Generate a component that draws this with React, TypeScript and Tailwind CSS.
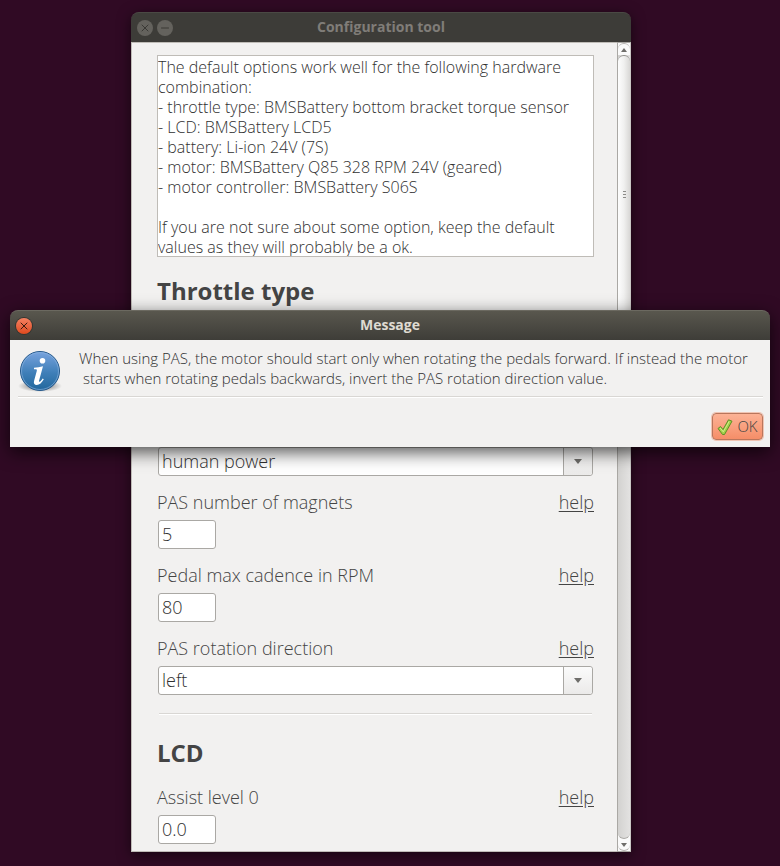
import { useState } from 'react';
import { Minus, X } from 'lucide-react';

const defaultNotes = `The default options work well for the following hardware combination:
- throttle type: BMSBattery bottom bracket torque sensor
- LCD: BMSBattery LCD5
- battery: Li-ion 24V (7S)
- motor: BMSBattery Q85 328 RPM 24V (geared)
- motor controller: BMSBattery S06S

If you are not sure about some option, keep the default values as they will probably be a ok.`;

export default function App() {
  const [open, setOpen] = useState(true);

  return (
    <div className="relative min-h-screen flex flex-col pt-3 pb-[14px] pl-[131px] pr-[149px] bg-[#300a24] font-['Open_Sans','Noto_Sans',sans-serif] font-light text-[#444444]">
      <ConfigWindow />
      {open && <MessageDialog onClose={() => setOpen(false)} />}
    </div>
  );
}

function ConfigWindow() {
  return (
    <div className="flex-1 flex flex-col rounded-t-lg shadow-[0_3px_14px_rgba(0,0,0,0.55)]">
      {/* Title bar */}
      <header className="relative h-[30px] flex items-center justify-center rounded-t-lg border-t border-[#4a4944] bg-[#3d3c38]">
        <div className="absolute left-[6px] flex gap-1">
          <button aria-label="Close" className="w-4 h-4 flex items-center justify-center rounded-full bg-[#64625d] text-[#3a3935]">
            <X className="w-3 h-3" />
          </button>
          <button aria-label="Minimize" className="w-4 h-4 flex items-center justify-center rounded-full bg-[#64625d] text-[#3a3935]">
            <Minus className="w-3 h-3" />
          </button>
        </div>
        <h1 className="pb-0.5 text-sm font-bold text-[#807d78]">Configuration tool</h1>
      </header>

      <div className="flex-1 flex">
        <main className="flex-1 min-w-0 pt-3 pb-[7px] pl-[25px] pr-[23px] border border-r-0 border-[#bfbcb7] bg-[#f2f1f0]">
          <textarea
            aria-label="Hardware notes"
            readOnly
            rows={10}
            defaultValue={defaultNotes}
            className="block w-full h-[202px] pt-px border border-[#bfbcb7] bg-white text-base leading-5 text-[#303030] resize-none overflow-hidden outline-none"
          />

          <h2 className="mt-[18px] text-2xl leading-8 font-bold">Throttle type</h2>
          <div className="mt-[140px] px-px">
            <Select id="control" label="Motor control" value="human power" />
          </div>

          <div className="mt-[14px] flex flex-col gap-[14px]">
            <Field id="magnets" label="PAS number of magnets">
              <TextInput id="magnets" value="5" />
            </Field>
            <Field id="cadence" label="Pedal max cadence in RPM">
              <TextInput id="cadence" value="80" />
            </Field>
            <Field id="direction" label="PAS rotation direction">
              <Select id="direction" value="left" />
            </Field>
          </div>

          <hr className="mt-[18px] mx-0.5 h-0.5 border-t border-b border-t-[#d9d7d4] border-b-white" />

          <h2 className="mt-[22px] mb-4 text-2xl leading-8 font-bold">LCD</h2>
          <Field id="assist" label="Assist level 0">
            <TextInput id="assist" value="0.0" />
          </Field>
        </main>
        <Scrollbar />
      </div>
    </div>
  );
}

function Field({ id, label, children }: { id: string; label: string; children: React.ReactNode }) {
  return (
    <div>
      <div className="flex justify-between text-lg leading-6">
        <label htmlFor={id}>{label}</label>
        <a href="#help" className="underline underline-offset-2">help</a>
      </div>
      <div className="mt-[6px] px-px">{children}</div>
    </div>
  );
}

function TextInput({ id, value }: { id: string; value: string }) {
  return (
    <input
      id={id}
      type="text"
      defaultValue={value}
      className="block w-[58px] h-[29px] px-[3px] pb-0.5 rounded-[3px] border border-[#aaa8a4] bg-white text-lg leading-6 text-[#303030] outline-none"
    />
  );
}

function Select({ id, value, label }: { id: string; value: string; label?: string }) {
  return (
    <div className="relative">
      <select
        id={id}
        aria-label={label}
        defaultValue={value}
        className="block w-full h-[29px] px-[3px] pb-0.5 appearance-none rounded-[3px] border border-[#aaa8a4] bg-white text-lg leading-6 text-[#303030] outline-none"
      >
        <option>{value}</option>
      </select>
      <span className="absolute inset-y-px right-px w-[29px] flex items-center justify-center rounded-r-[3px] border-l border-[#aaa8a4] bg-linear-to-b from-[#fbfbfb] to-[#ebeae9] pointer-events-none">
        <Triangle className="w-2 h-[5px]" />
      </span>
    </div>
  );
}

function Triangle({ className }: { className: string }) {
  return (
    <svg viewBox="0 0 8 5" preserveAspectRatio="none" className={className} aria-hidden="true">
      <path d="M0 0h8L4 5z" fill="#6f6e6b" />
    </svg>
  );
}

function Scrollbar() {
  return (
    <div className="w-[14px] flex flex-col border border-[#aaa8a4] border-r-[#c9c7c4] bg-[#fafafa]">
      <button aria-label="Scroll up" className="h-3 flex items-center justify-center rounded-t-full border-t border-[#b5b3b0]">
        <Triangle className="w-[6px] h-[4px] rotate-180" />
      </button>
      <div className="flex-1 rounded-b-full border-b border-[#aaa8a4] bg-linear-to-r from-[#d3d2d0] to-[#e3e2e1]">
        <div className="h-[278px] flex flex-col items-center justify-center gap-0.5 rounded-full border-t border-b border-[#908f8c] bg-linear-to-r from-[#fdfdfd] via-[#f0f0ef] to-[#d8d7d5]">
          <span className="w-[3px] h-px bg-[#8c8b88]" />
          <span className="w-[3px] h-px bg-[#8c8b88]" />
          <span className="w-[3px] h-px bg-[#8c8b88]" />
        </div>
      </div>
      <button aria-label="Scroll down" className="h-3 flex items-center justify-center rounded-b-full border-b border-[#b5b3b0]">
        <Triangle className="w-[6px] h-[4px]" />
      </button>
    </div>
  );
}

function MessageDialog({ onClose }: { onClose: () => void }) {
  return (
    <div
      role="dialog"
      aria-labelledby="message-title"
      className="absolute top-[310px] inset-x-[10px] rounded-t-lg shadow-[0_5px_18px_rgba(0,0,0,0.7)]"
    >
      <header className="relative h-[30px] flex items-center justify-center rounded-t-lg border-t border-[#6b6960] bg-linear-to-b from-[#59574e] to-[#3e3d38]">
        <button
          aria-label="Close message"
          onClick={onClose}
          className="absolute left-[6px] w-4 h-4 flex items-center justify-center rounded-full bg-linear-to-b from-[#f58060] to-[#e0491b] text-[#3a1c10] shadow-[0_0_0_1px_#35342f]"
        >
          <X className="w-3 h-3" />
        </button>
        <h2 id="message-title" className="pb-0.5 text-sm font-bold text-[#dfdbd2]">Message</h2>
      </header>

      <div className="pt-2 pr-[7px] pb-[7px] pl-2 bg-[#f2f1f0]">
        <div className="flex">
          <InfoIcon />
          <p className="ml-[13px] text-[15px] leading-5 whitespace-pre text-[#303030]">
            When using PAS, the motor should start only when rotating the pedals forward. If instead the motor
            {'\n starts when rotating pedals backwards, invert the PAS rotation direction value.'}
          </p>
        </div>
        <hr className="h-0.5 border-t border-b border-t-[#d9d7d4] border-b-white" />
        <div className="mt-[15px] flex justify-end">
          <button
            onClick={onClose}
            className="h-[27px] w-[51px] flex items-center justify-center gap-1 rounded border border-[#b9765c] bg-linear-to-b from-[#fcb295] to-[#f58e68] text-[15px] shadow-[0_0_0_1px_#f0c4b3]"
          >
            <CheckIcon />
            OK
          </button>
        </div>
      </div>
    </div>
  );
}

function InfoIcon() {
  return (
    <svg viewBox="0 0 48 48" className="w-12 h-12 shrink-0" role="img" aria-label="Information">
      <defs>
        <linearGradient id="info-fill" x1="0" y1="0" x2="0" y2="1">
          <stop offset="0" stopColor="#78a3de" />
          <stop offset="0.55" stopColor="#3f7fb8" />
          <stop offset="1" stopColor="#22679c" />
        </linearGradient>
        <radialGradient id="info-shadow">
          <stop offset="0.5" stopColor="#000" stopOpacity="0.3" />
          <stop offset="1" stopColor="#000" stopOpacity="0" />
        </radialGradient>
      </defs>
      <ellipse cx="22" cy="38" rx="22" ry="6" fill="url(#info-shadow)" />
      <circle cx="22" cy="23" r="19.5" fill="url(#info-fill)" stroke="#25598c" />
      <circle cx="22" cy="23" r="18.5" fill="none" stroke="#8fb8e2" strokeOpacity="0.6" />
      <circle cx="24.5" cy="12.7" r="2.8" fill="#fff" />
      <path
        d="M16 19.8c3-.3 6-.8 9-1.6l-3.9 14.4c-.4 1.3.4 1.5 1.4.6.8-.7 1.5-1.6 2.2-2.6l1.1.7c-2 3.5-4.4 5.7-7 5.7-2.6 0-3.4-1.7-2.7-4.3l2.6-9.5c.4-1.6.1-2-1.2-2H16z"
        fill="#fff"
      />
    </svg>
  );
}

function CheckIcon() {
  return (
    <svg viewBox="0 0 16 16" className="w-4 h-4" aria-hidden="true">
      <path
        d="M1 9.5 3.5 7.5 6 10.5 11.5 0.8 15 2.2 7.5 15.5 5.5 15.5z"
        fill="#a3d14b"
        stroke="#5d8f25"
        strokeLinejoin="round"
      />
      <path d="M3.2 9 6.3 12.8 12.2 2.3" fill="none" stroke="#d2ee8b" />
    </svg>
  );
}
